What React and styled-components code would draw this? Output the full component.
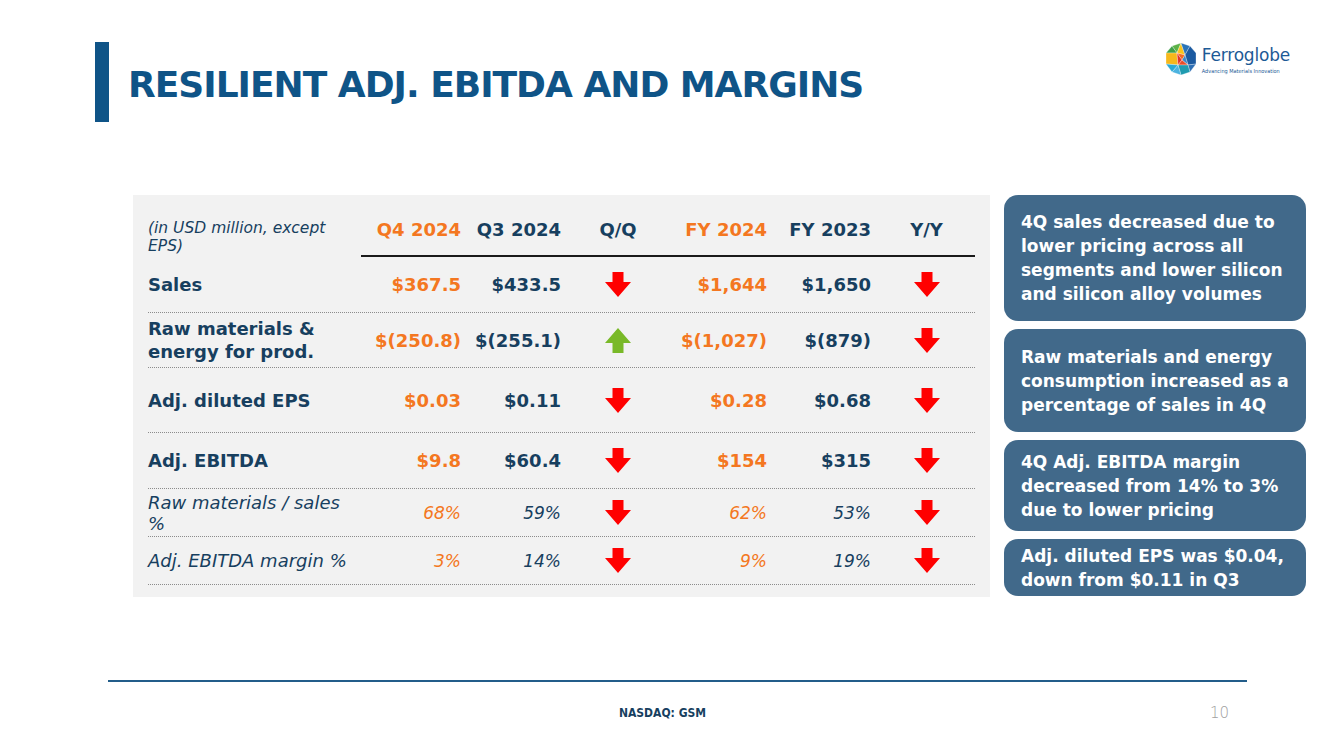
import styled, { createGlobalStyle } from 'styled-components';

const NAVY = '#173f5f';
const ORANGE = '#f47721';
const BRAND = '#0f5487';

const GlobalStyle = createGlobalStyle`
  body {
    margin: 0;
    background: #fff;
    font-family: "DejaVu Sans", "Liberation Sans", sans-serif;
  }
`;

const rows = [
  { label: ['Sales'], q4: '$367.5', q3: '$433.5', qq: 'down', fy24: '$1,644', fy23: '$1,650', yy: 'down', h: 56 },
  { label: ['Raw materials &', 'energy for prod.'], q4: '$(250.8)', q3: '$(255.1)', qq: 'up', fy24: '$(1,027)', fy23: '$(879)', yy: 'down', h: 55 },
  { label: ['Adj. diluted EPS'], q4: '$0.03', q3: '$0.11', qq: 'down', fy24: '$0.28', fy23: '$0.68', yy: 'down', h: 65 },
  { label: ['Adj. EBITDA'], q4: '$9.8', q3: '$60.4', qq: 'down', fy24: '$154', fy23: '$315', yy: 'down', h: 56 },
  { label: ['Raw materials / sales', '%'], q4: '68%', q3: '59%', qq: 'down', fy24: '62%', fy23: '53%', yy: 'down', h: 48, italic: true },
  { label: ['Adj. EBITDA margin %'], q4: '3%', q3: '14%', qq: 'down', fy24: '9%', fy23: '19%', yy: 'down', h: 48, italic: true },
];

const notes = [
  { lines: ['4Q sales decreased due to', 'lower pricing across all', 'segments and lower silicon', 'and silicon alloy volumes'], h: 126 },
  { lines: ['Raw materials and energy', 'consumption increased as a', 'percentage of sales in 4Q'], h: 103 },
  { lines: ['4Q Adj. EBITDA margin', 'decreased from 14% to 3%', 'due to lower pricing'], h: 91 },
  { lines: ['Adj. diluted EPS was $0.04,', 'down from $0.11 in Q3'], h: 57 },
];

function Lines({ lines }) {
  return lines.map((l, i) => (
    <span key={i}>
      {l}
      {i < lines.length - 1 && <br />}
    </span>
  ));
}

function Arrow({ dir }) {
  const up = dir === 'up';
  return (
    <svg width="26" height="25" viewBox="0 0 26 25">
      <polygon
        points="7.5,0 18.5,0 18.5,10 26,10 13,25 0,10 7.5,10"
        fill={up ? '#79b928' : '#ff0000'}
        transform={up ? 'rotate(180 13 12.5)' : undefined}
      />
    </svg>
  );
}

function Logo() {
  const P = [
    [16, 0], [25, 3], [31, 10], [31, 21], [25, 29], [16, 32], [7, 29], [1, 21], [1, 10], [7, 3],
  ];
  const A = [12, 10], B = [20, 12], C = [17, 17], D = [13, 22], E = [23, 22];
  const facets = [
    [[P[9], P[0], A], '#5cb248'],
    [[P[0], B, A], '#f9c31b'],
    [[P[0], P[1], B], '#2a74b8'],
    [[P[1], P[2], P[3], E, B], '#1b5aa0'],
    [[P[8], P[9], A], '#3fa14a'],
    [[P[8], A, D, P[7]], '#f6b81c'],
    [[A, B, C], '#f26b21'],
    [[A, C, D], '#e2312b'],
    [[B, E, C], '#3c86c6'],
    [[C, E, D], '#e84d2a'],
    [[P[3], P[4], E], '#2d6fb5'],
    [[P[4], P[5], D, E], '#1f9bb0'],
    [[P[5], P[6], D], '#4cb3e0'],
    [[P[6], P[7], D], '#29a9d6'],
  ];
  return (
    <svg width="32" height="32" viewBox="0 0 32 32">
      {facets.map(([pts, c], i) => (
        <polygon key={i} points={pts.map((p) => p.join(',')).join(' ')} fill={c} stroke="#fff" strokeWidth="0.3" />
      ))}
    </svg>
  );
}

export default function App() {
  return (
    <>
      <GlobalStyle />
      <Slide>
        <Header>
          <TitleBar />
          <Title>RESILIENT ADJ. EBITDA AND MARGINS</Title>
          <Brand>
            <Logo />
            <BrandText>
              <BrandName>Ferroglobe</BrandName>
              <BrandTag>Advancing Materials Innovation</BrandTag>
            </BrandText>
          </Brand>
        </Header>

        <Content>
          <Panel>
            <HeaderRow>
              <UnitsLabel>
                (in USD million, except
                <br />
                EPS)
              </UnitsLabel>
              <HeadCell $accent>Q4 2024</HeadCell>
              <HeadCell>Q3 2024</HeadCell>
              <HeadCell $center>Q/Q</HeadCell>
              <HeadCell $accent>FY 2024</HeadCell>
              <HeadCell>FY 2023</HeadCell>
              <HeadCell $center $shift>Y/Y</HeadCell>
            </HeaderRow>
            {rows.map((r) => (
              <Row key={r.label[0]} $h={r.h}>
                <Label $italic={r.italic}>
                  <Lines lines={r.label} />
                </Label>
                <Value $accent $italic={r.italic}>{r.q4}</Value>
                <Value $italic={r.italic}>{r.q3}</Value>
                <ArrowCell>
                  <Arrow dir={r.qq} />
                </ArrowCell>
                <Value $accent $italic={r.italic}>{r.fy24}</Value>
                <Value $italic={r.italic}>{r.fy23}</Value>
                <ArrowCell $shift>
                  <Arrow dir={r.yy} />
                </ArrowCell>
              </Row>
            ))}
          </Panel>

          <Notes>
            {notes.map((n) => (
              <Note key={n.lines[0]} $h={n.h}>
                <div>
                  <Lines lines={n.lines} />
                </div>
              </Note>
            ))}
          </Notes>
        </Content>

        <Rule />
        <Footer>
          <span />
          <Ticker>NASDAQ: GSM</Ticker>
          <PageNo>10</PageNo>
        </Footer>
      </Slide>
    </>
  );
}

const Slide = styled.div`
  width: 1333px;
  height: 749px;
  overflow: hidden;
  display: flex;
  flex-direction: column;
  background: #fff;
`;

const Header = styled.header`
  display: flex;
  align-items: center;
  height: 80px;
  margin-top: 42px;
  padding: 0 43px 0 95px;
`;

const TitleBar = styled.div`
  width: 14px;
  height: 80px;
  background: ${BRAND};
  flex-shrink: 0;
`;

const Title = styled.h1`
  margin: 4px 0 0 19px;
  font-size: 36px;
  font-weight: bold;
  letter-spacing: -1px;
  color: ${BRAND};
  white-space: nowrap;
`;

const Brand = styled.div`
  margin-left: auto;
  align-self: flex-start;
  margin-top: 1px;
  display: flex;
  align-items: flex-start;
  gap: 5px;
`;

const BrandText = styled.div`
  display: flex;
  flex-direction: column;
`;

const BrandName = styled.span`
  font-size: 17px;
  line-height: 24px;
  letter-spacing: -0.2px;
  color: #1d5a96;
`;

const BrandTag = styled.span`
  font-family: "DejaVu Sans Condensed", "DejaVu Sans", sans-serif;
  font-size: 5.5px;
  color: #1d5a96;
  margin-top: 1px;
`;

const Content = styled.main`
  display: flex;
  align-items: flex-start;
  gap: 14px;
  margin-top: 73px;
  padding-left: 133px;
`;

const Panel = styled.section`
  width: 857px;
  box-sizing: border-box;
  padding: 0 15px 12px;
  background: #f2f2f2;
`;

const columns = '213px 100px 100px 114px 92px 104px 104px';

const HeaderRow = styled.div`
  display: grid;
  grid-template-columns: ${columns};
  height: 62px;
`;

const UnitsLabel = styled.div`
  align-self: end;
  padding-bottom: 2px;
  font-size: 15.5px;
  line-height: 18px;
  font-style: italic;
  color: ${NAVY};
  white-space: nowrap;
`;

const HeadCell = styled.div`
  display: flex;
  align-items: flex-end;
  justify-content: ${(p) => (p.$center ? 'center' : 'flex-end')};
  padding-bottom: 14px;
  padding-left: ${(p) => (p.$shift ? '7px' : '0')};
  border-bottom: 2px solid #1a1a1a;
  font-size: 18px;
  line-height: 22px;
  font-weight: bold;
  color: ${(p) => (p.$accent ? ORANGE : NAVY)};
  white-space: nowrap;
`;

const Row = styled.div`
  display: grid;
  grid-template-columns: ${columns};
  align-items: center;
  height: ${(p) => p.$h}px;
  box-sizing: border-box;
  border-bottom: 1px dotted #8c8c8c;
`;

const Label = styled.div`
  font-size: 18px;
  line-height: ${(p) => (p.$italic ? '21px' : '23px')};
  font-weight: ${(p) => (p.$italic ? 'normal' : 'bold')};
  font-style: ${(p) => (p.$italic ? 'italic' : 'normal')};
  color: ${NAVY};
  white-space: nowrap;
`;

const Value = styled.div`
  text-align: right;
  font-size: ${(p) => (p.$italic ? '17px' : '18px')};
  font-weight: ${(p) => (p.$italic ? 'normal' : 'bold')};
  font-style: ${(p) => (p.$italic ? 'italic' : 'normal')};
  color: ${(p) => (p.$accent ? ORANGE : NAVY)};
  white-space: nowrap;
`;

const ArrowCell = styled.div`
  display: flex;
  justify-content: center;
  padding-left: ${(p) => (p.$shift ? '7px' : '0')};
  svg {
    display: block;
  }
`;

const Notes = styled.aside`
  display: flex;
  flex-direction: column;
  gap: 8px;
  width: 302px;
`;

const Note = styled.div`
  display: flex;
  align-items: center;
  height: ${(p) => p.$h}px;
  box-sizing: border-box;
  padding: 0 10px 0 17px;
  border-radius: 14px;
  background: #41698a;
  color: #fff;
  font-size: 17px;
  line-height: 24px;
  font-weight: bold;
  white-space: nowrap;
`;

const Rule = styled.div`
  height: 2px;
  margin: 83px 86px 0 108px;
  background: #235d8a;
`;

const Footer = styled.footer`
  display: grid;
  grid-template-columns: 1fr auto 1fr;
  align-items: center;
  margin-top: 22px;
  padding: 0 104px;
`;

const Ticker = styled.span`
  font-family: "DejaVu Sans Condensed", "DejaVu Sans", sans-serif;
  font-size: 12px;
  line-height: 14px;
  font-weight: bold;
  color: ${NAVY};
  margin-left: -8px;
`;

const PageNo = styled.span`
  justify-self: end;
  font-size: 15px;
  color: #a0a0a0;
  font-weight: 300;
`;
